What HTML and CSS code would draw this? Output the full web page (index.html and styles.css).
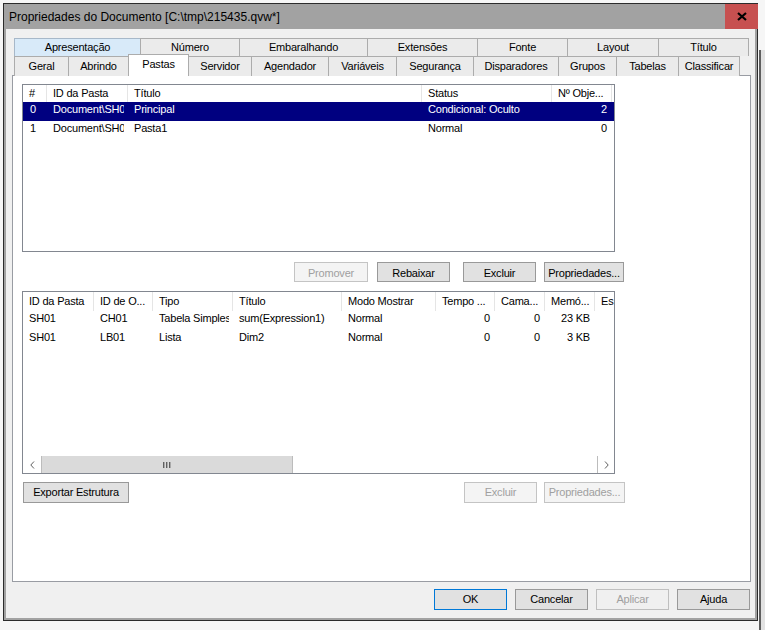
FILE: index.html
```html
<!DOCTYPE html>
<html lang="pt">
<head>
<meta charset="utf-8">
<title>Propriedades do Documento</title>
<link rel="stylesheet" href="styles.css">
</head>
<body>
<div class="window">
  <div class="titlebar">
    <span class="title">Propriedades do Documento [C:\tmp\215435.qvw*]</span>
    <div class="close">
      <svg width="10" height="9" viewBox="0 0 10 9"><path d="M1 1 L9 8 M9 1 L1 8" stroke="#000" stroke-width="2.2" fill="none"/></svg>
    </div>
  </div>
  <div class="client">
    <div class="tabs">
      <div class="tabrow row1">
        <div class="tab hover">Apresentação</div>
        <div class="tab">Número</div>
        <div class="tab">Embaralhando</div>
        <div class="tab">Extensões</div>
        <div class="tab">Fonte</div>
        <div class="tab">Layout</div>
        <div class="tab last">Título</div>
      </div>
      <div class="tabrow row2">
        <div class="tab">Geral</div>
        <div class="tab">Abrindo</div>
        <div class="tab active">Pastas</div>
        <div class="tab">Servidor</div>
        <div class="tab">Agendador</div>
        <div class="tab">Variáveis</div>
        <div class="tab">Segurança</div>
        <div class="tab">Disparadores</div>
        <div class="tab">Grupos</div>
        <div class="tab">Tabelas</div>
        <div class="tab last">Classificar</div>
      </div>
    </div>
    <div class="panel">
      <div class="lv lv-top">
        <div class="lv-row hdr">
          <div class="c">#</div>
          <div class="c">ID da Pasta</div>
          <div class="c">Título</div>
          <div class="c">Status</div>
          <div class="c">Nº Obje...</div>
        </div>
        <div class="lv-row data sel">
          <div class="c first">0</div>
          <div class="c">Document\SH01</div>
          <div class="c">Principal</div>
          <div class="c">Condicional: Oculto</div>
          <div class="c num">2</div>
        </div>
        <div class="lv-row data">
          <div class="c first">1</div>
          <div class="c">Document\SH02</div>
          <div class="c">Pasta1</div>
          <div class="c">Normal</div>
          <div class="c num">0</div>
        </div>
      </div>
      <div class="btnrow btnrow-mid">
        <button class="btn dis b-prom">Promover</button>
        <button class="btn b-reb">Rebaixar</button>
        <button class="btn b-exc">Excluir</button>
        <button class="btn b-prop">Propriedades...</button>
      </div>
      <div class="lv lv-bottom">
        <div class="lv-body">
          <div class="lv-row hdr">
            <div class="c">ID da Pasta</div>
            <div class="c">ID de O...</div>
            <div class="c">Tipo</div>
            <div class="c">Título</div>
            <div class="c">Modo Mostrar</div>
            <div class="c">Tempo ...</div>
            <div class="c">Cama...</div>
            <div class="c">Memó...</div>
            <div class="c">Es</div>
          </div>
          <div class="lv-row data">
            <div class="c">SH01</div>
            <div class="c">CH01</div>
            <div class="c">Tabela Simples</div>
            <div class="c">sum(Expression1)</div>
            <div class="c">Normal</div>
            <div class="c num">0</div>
            <div class="c num">0</div>
            <div class="c num">23 KB</div>
            <div class="c"></div>
          </div>
          <div class="lv-row data">
            <div class="c">SH01</div>
            <div class="c">LB01</div>
            <div class="c">Lista</div>
            <div class="c">Dim2</div>
            <div class="c">Normal</div>
            <div class="c num">0</div>
            <div class="c num">0</div>
            <div class="c num">3 KB</div>
            <div class="c"></div>
          </div>
        </div>
        <div class="hscroll">
          <div class="sb-arrow sb-left">
            <svg width="5" height="8" viewBox="0 0 5 8"><path d="M4 0.5 L0.8 4 L4 7.5" stroke="#606060" stroke-width="1" fill="none"/></svg>
          </div>
          <div class="sb-thumb">
            <svg width="8" height="6" viewBox="0 0 8 6"><rect x="0" y="0" width="1.4" height="6" fill="#606060"/><rect x="3" y="0" width="1.4" height="6" fill="#606060"/><rect x="6" y="0" width="1.4" height="6" fill="#606060"/></svg>
          </div>
          <div class="sb-track"></div>
          <div class="sb-arrow sb-right">
            <svg width="5" height="8" viewBox="0 0 5 8"><path d="M1 0.5 L4.2 4 L1 7.5" stroke="#606060" stroke-width="1" fill="none"/></svg>
          </div>
        </div>
      </div>
      <div class="btnrow btnrow-low">
        <button class="btn b-export">Exportar Estrutura</button>
        <button class="btn dis b-exc2">Excluir</button>
        <button class="btn dis b-prop2">Propriedades...</button>
      </div>
    </div>
    <div class="dlg">
      <button class="btn dlg-btn ok">OK</button>
      <button class="btn dlg-btn">Cancelar</button>
      <button class="btn dlg-btn dis">Aplicar</button>
      <button class="btn dlg-btn">Ajuda</button>
    </div>
  </div>
</div>
</body>
</html>
```
FILE: styles.css
```css
html, body {
  margin: 0;
  padding: 0;
}
body {
  background:
    linear-gradient(to right, transparent 759px, #5e5e5e 759px, #5e5e5e 761px, #e2e2e2 761px) 0 50px / 765px 580px no-repeat,
    #f6f6f6;
  font-family: "Liberation Sans", Arial, sans-serif;
  font-size: 11px;
  letter-spacing: -0.2px;
  color: #000;
  width: 765px;
  height: 630px;
  overflow: hidden;
}

.window {
  box-sizing: border-box;
  width: 755px;
  height: 618px;
  margin: 3px 0 0 3px;
  border: 1px solid #2b2b2b;
  background: #a2a2a2;
  display: flex;
  flex-direction: column;
}

.titlebar {
  height: 25px;
  display: flex;
  align-items: center;
  flex: none;
}
.title {
  padding-left: 5px;
  font-size: 12px;
  letter-spacing: 0;
  color: #000;
  white-space: nowrap;
}
.close {
  margin-left: auto;
  margin-right: -1px;
  width: 33px;
  height: 25px;
  background: #c75050;
  display: flex;
  align-items: center;
  justify-content: center;
}

.client {
  flex: 1;
  margin: 0 2px 2px;
  background: #f0f0f0;
  padding-top: 9px;
}

.tabs {
  margin-left: 8px;
}
.tabrow {
  display: grid;
}
.row1 {
  grid-template-columns: 126px 99px 128px 110px 90px 91px 91px;
  height: 18px;
}
.row2 {
  grid-template-columns: 54px 60px 60px 63px 77px 68px 77px 85px 58px 62px 62px;
  height: 19px;
}
.tab {
  box-sizing: border-box;
  border-style: solid;
  border-color: #acacac;
  border-width: 1px 0 0 1px;
  background: #ebebeb;
  text-align: center;
  white-space: nowrap;
  line-height: 17px;
  overflow: hidden;
}
.row2 .tab {
  line-height: 18px;
}
.tab.last {
  border-right-width: 1px;
}
.tab.hover {
  background: #d8eaf9;
  border-color: #a7b8c9;
}
.row2 .tab.active {
  position: relative;
  z-index: 1;
  background: #fff;
  height: 22px;
  margin: -2px -1px 0 0;
  border-right-width: 1px;
  line-height: 18px;
}

.panel {
  box-sizing: border-box;
  margin-left: 6px;
  width: 739px;
  height: 507px;
  border: 1px solid #999ca3;
  background: #fff;
  padding: 8px 0 0 9px;
}

.lv {
  box-sizing: border-box;
  width: 593px;
  border: 1px solid #828790;
  background: #fff;
  overflow: hidden;
}
.lv-top {
  height: 168px;
}
.lv-bottom {
  height: 183px;
  margin-top: 9px;
  display: flex;
  flex-direction: column;
}
.lv-body {
  flex: 1;
  overflow: hidden;
}
.lv-row {
  display: grid;
}
.lv-top .lv-row {
  grid-template-columns: 24px 81px 294px 130px 60px;
}
.lv-bottom .lv-row {
  grid-template-columns: 71px 59px 80px 109px 94px 59px 50px 50px 60px;
}
.c {
  box-sizing: border-box;
  white-space: nowrap;
  overflow: hidden;
}
.hdr .c {
  padding-left: 6px;
  border-right: 1px solid #e5e5e5;
}
.lv-top .hdr {
  height: 17px;
  line-height: 17px;
}
.lv-bottom .hdr {
  height: 19px;
  line-height: 19px;
}
.data {
  height: 19px;
}
.data .c {
  line-height: 15px;
  padding: 0 4px 0 6px;
  clip-path: inset(0 4px 0 0);
}
.data .c.first {
  padding-left: 7px;
}
.data .c.num {
  text-align: right;
  padding: 0 5px 0 0;
  clip-path: none;
}
.sel {
  background: #000080;
  color: #fff;
}

.hscroll {
  flex: none;
  height: 17px;
  display: flex;
  background: #fff;
}
.sb-arrow {
  width: 18px;
  display: flex;
  align-items: center;
  justify-content: center;
  background: #fff;
}
.sb-right {
  width: 16px;
  border-left: 1px solid #bcbcbc;
}
.sb-thumb {
  box-sizing: border-box;
  width: 252px;
  background: #dadada;
  border-left: 1px solid #bcbcbc;
  border-right: 1px solid #bcbcbc;
  display: flex;
  align-items: center;
  justify-content: center;
}
.sb-track {
  flex: 1;
  background: #fff;
}

.btnrow {
  display: flex;
}
.btn {
  box-sizing: border-box;
  margin: 0;
  padding: 0;
  font-family: inherit;
  font-size: 11px;
  letter-spacing: -0.2px;
  color: #000;
  background: #e1e1e1;
  border: 1px solid #999;
  border-radius: 0;
  text-align: center;
  white-space: nowrap;
}
.btn.dis {
  background: #f4f4f4;
  border-color: #c4c4c4;
  color: #a0a0a0;
}
.btnrow-mid {
  margin-top: 10px;
  padding-left: 272px;
}
.btnrow-mid .btn {
  height: 20px;
  line-height: 20px;
}
.b-prom { width: 74px; }
.b-reb { width: 73px; margin-left: 9px; }
.b-exc { width: 73px; margin-left: 13px; }
.b-prop { width: 80px; margin-left: 8px; }

.btnrow-low {
  margin-top: 8px;
}
.btnrow-low .btn {
  height: 21px;
  line-height: 19px;
}
.b-export { width: 106px; margin-left: 1px; }
.b-exc2 { width: 73px; margin-left: 335px; }
.b-prop2 { width: 81px; margin-left: 7px; }

.dlg {
  display: flex;
  justify-content: flex-end;
  gap: 8px;
  margin-top: 7px;
  padding-right: 5px;
}
.dlg-btn {
  width: 73px;
  height: 21px;
  line-height: 19px;
}
.dlg-btn.dis {
  background: #f0f0f0;
  border-color: #bfbfbf;
}
.dlg-btn.ok {
  border-color: #0078d7;
}
```
